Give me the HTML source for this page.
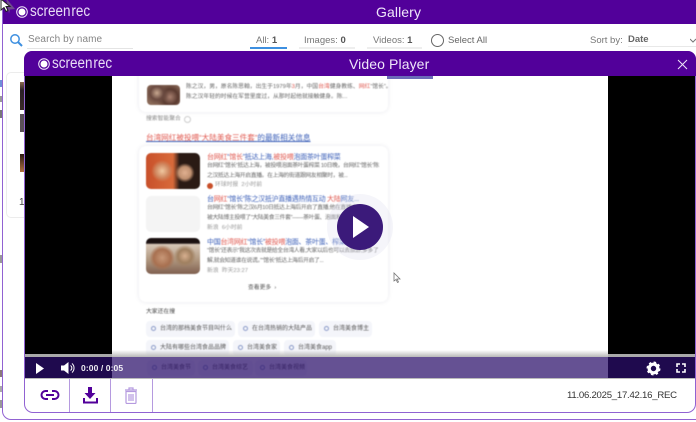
<!DOCTYPE html>
<html><head><meta charset="utf-8"><style>
html,body{margin:0;padding:0;background:#fff}
body{width:696px;height:422px;position:relative;overflow:hidden;font-family:"Liberation Sans","Noto Sans CJK SC",sans-serif}
.a{position:absolute}
.t{position:absolute;white-space:nowrap;line-height:1}
.u{position:absolute;height:1px;background:#e4e4e4}
.hd{background:#52009a;color:#f0e6fa}
.c{position:absolute;background:#fff;border-radius:7px;box-shadow:0 0 5px rgba(90,90,130,.14)}
.l{position:absolute;white-space:nowrap;font-size:5.8px;line-height:1;color:#666}
.n{letter-spacing:-.33px}
.h{position:absolute;white-space:nowrap;font-size:7px;line-height:1;color:#3b5fb8;letter-spacing:-.28px}
.r{color:#e0584f}
.chip{position:absolute;height:16px;background:#f4f5fa;border-radius:4px;font-size:6px;line-height:16px;color:#555;white-space:nowrap;padding-left:14px;box-sizing:border-box}
.chip:before{content:"";position:absolute;left:5px;top:5px;width:3px;height:3px;border:1px solid #8a9ac8;border-radius:50%}
.th{position:absolute;width:54px;height:36px;border-radius:5px;overflow:hidden}
.logo{transform:scaleX(.87);transform-origin:0 0;font-size:15.5px;color:#e8dcf6}
</style></head><body>

<!-- behind fragments -->
<div class="a" style="left:0;top:80px;width:2px;height:7px;background:#6f8fd8"></div>
<div class="a" style="left:0;top:96px;width:2px;height:6px;background:#999"></div>
<div class="a" style="left:0;top:110px;width:2px;height:8px;background:#777"></div>
<div class="a" style="left:0;top:255px;width:2px;height:8px;background:#999"></div>
<div class="a" style="left:0;top:370px;width:2px;height:7px;background:#8a7a7a"></div>
<div class="a" style="left:0;top:386px;width:2px;height:6px;background:#aaa"></div>
<div class="a" style="left:0;top:400px;width:2px;height:8px;background:#999"></div>

<!-- gallery window -->
<div class="a" style="left:2px;top:-10px;width:720px;height:430px;box-sizing:border-box;border:1px solid #9162d2;border-radius:9px;background:#fff"></div>
<div class="a hd" style="left:3px;top:0;width:693px;height:24px"></div>
<svg class="a" style="left:15px;top:5px" width="14" height="14" viewBox="0 0 14 14"><circle cx="7" cy="7" r="5.3" fill="none" stroke="#f0e6fa" stroke-width="1"/><circle cx="7" cy="7" r="3.5" fill="#fff"/></svg>
<div class="t logo" style="left:30px;top:4px">screen<span style="margin-left:1px">rec</span></div>
<div class="t" style="left:376px;top:5px;font-size:14px;color:#efe6fa;letter-spacing:.1px">Gallery</div>

<svg class="a" style="left:9px;top:33px" width="15" height="15" viewBox="0 0 15 15"><circle cx="6" cy="6" r="4.2" fill="none" stroke="#3d8fe0" stroke-width="1.5"/><path d="M9 9l4 4" stroke="#3d8fe0" stroke-width="2"/></svg>
<div class="t" style="left:28px;top:35px;font-size:10px;color:#858585;letter-spacing:.1px">Search by name</div>
<div class="u" style="left:27px;top:48px;width:106px"></div>
<div class="t" style="left:256px;top:36px;font-size:9.5px;color:#777">All: <b style="color:#555">1</b></div>
<div class="a" style="left:250px;top:47px;width:37px;height:2px;background:#3d8fe0"></div>
<div class="t" style="left:304px;top:36px;font-size:9.5px;color:#777">Images: <b style="color:#555">0</b></div>
<div class="u" style="left:299px;top:47px;width:56px;height:2px;background:#eee"></div>
<div class="t" style="left:373px;top:36px;font-size:9.5px;color:#777">Videos: <b style="color:#555">1</b></div>
<div class="u" style="left:367px;top:47px;width:55px;height:2px;background:#eee"></div>
<div class="a" style="left:431px;top:34px;width:13px;height:13px;box-sizing:border-box;border:1.2px solid #666;border-radius:50%"></div>
<div class="t" style="left:448px;top:36px;font-size:9.5px;color:#666">Select All</div>
<div class="t" style="left:590px;top:36px;font-size:9.5px;color:#777">Sort by:</div>
<div class="t" style="left:628px;top:35px;font-size:9.5px;font-weight:bold;color:#666">Date</div>
<div class="u" style="left:628px;top:46px;width:68px;height:1px;background:#e8e8e8"></div>
<svg class="a" style="left:690px;top:38px" width="6" height="5"><path d="M0 1l3 3 3-3" fill="none" stroke="#777"/></svg>

<!-- gallery card behind -->
<div class="a" style="left:6px;top:72px;width:30px;height:146px;box-sizing:border-box;border:1px solid #ececec;border-radius:5px"></div>
<div class="a" style="left:20px;top:82px;width:6px;height:28px;background:linear-gradient(#8a6a50,#2a2028 30%,#3a2a28)"></div>
<div class="a" style="left:20px;top:114px;width:6px;height:18px;background:#5a5058"></div>
<div class="a" style="left:20px;top:154px;width:6px;height:18px;background:linear-gradient(#2a1a14,#b07040)"></div>
<div class="t" style="left:19px;top:198px;font-size:10px;color:#444">1</div>

<!-- player -->
<div class="a" style="left:24px;top:51px;width:672px;height:362px;box-sizing:border-box;border:1px solid #9162d2;border-radius:9px;background:#fff;overflow:hidden"></div>
<div class="a hd" style="left:24px;top:51px;width:672px;height:25px;border-radius:8px 8px 0 0"></div>
<svg class="a" style="left:37px;top:57px" width="14" height="14" viewBox="0 0 14 14"><circle cx="7" cy="7" r="5.3" fill="none" stroke="#f0e6fa" stroke-width="1"/><circle cx="7" cy="7" r="3.5" fill="#fff"/></svg>
<div class="t logo" style="left:52px;top:56px">screen<span style="margin-left:1px">rec</span></div>
<div class="t" style="left:349px;top:57px;font-size:14px;color:#efe6fa;letter-spacing:.1px">Video Player</div>
<svg class="a" style="left:677px;top:59px" width="11" height="11"><path d="M1 1l9 9M10 1l-9 9" stroke="#efe6fa" stroke-width="1"/></svg>

<!-- video -->
<div class="a" style="left:25px;top:76px;width:670px;height:281px;background:#000"></div>
<div class="a" style="left:25px;top:354px;width:670px;height:3px;background:#a9a9a9"></div>
<div class="a" style="left:25px;top:357px;width:670px;height:21px;background:#1f0a4e"></div>
<div class="a" style="left:112px;top:76px;width:496px;height:302px;background:#fff;overflow:hidden">
 <div class="a" style="left:0;top:-76px;width:496px;height:400px;filter:blur(.45px)">
  <div class="c" style="left:27px;top:60px;width:249px;height:52px"></div>
  <div class="a" style="left:35px;top:85px;width:33px;height:20px;border-radius:4px;background:radial-gradient(circle at 30% 40%,#c8a890 0,#6a4a40 25%,transparent 45%),radial-gradient(circle at 70% 60%,#a88070 0,#5a3a30 30%,transparent 55%),#8a6a58"></div>
  <div class="l" style="left:74px;top:85px">陈之汉，男，原名陈思翰，出生于1979年<span class="r">3</span>月，中国<span class="r">台湾</span>健身教练、<span class="r">网红</span>“馆长”。</div>
  <div class="l" style="left:74px;top:95px">陈之汉年轻的时候在军营里度过，从那时起他就接触健身。陈...</div>
  <div class="l" style="left:34px;top:117px;color:#888">搜索智能聚合</div>
  <div class="a" style="left:72px;top:116px;width:5px;height:5px;border:1px solid #ccc;border-radius:50%"></div>
  <div class="t" style="left:34px;top:134px;font-size:7.6px;color:#3b5fb8;text-decoration:underline;text-decoration-thickness:.5px"><span class="r">台湾网红被投喂“大陆美食三件套”</span>的最新相关信息</div>

  <div class="c" style="left:27px;top:146px;width:249px;height:156px"></div>
  <div class="th" style="left:34px;top:153px;background:radial-gradient(circle at 72% 55%,#e0b090 0,#c09070 14%,transparent 22%),radial-gradient(circle at 30% 50%,#f0c8a0 0,#d08860 16%,transparent 26%),linear-gradient(90deg,#c8502a 0,#d86a3a 50%,#2a1a14 62%,#2a1a14 100%)"></div>
  <div class="h" style="left:95px;top:154px"><span class="r">台网红</span>“<span class="r">馆长</span>”抵达上海,<span class="r">被投喂</span>泡面茶叶蛋榨菜</div>
  <div class="l n" style="left:95px;top:164px">台网红“馆长”抵达上海，被投喂泡面茶叶蛋榨菜 10日晚，台网红“馆长”陈</div>
  <div class="l n" style="left:95px;top:174px">之汉抵达上海开启直播。在上海的街道跟网友相聚时，被...</div>
  <div class="a" style="left:95px;top:183px;width:6px;height:6px;border-radius:50%;background:#c8502a"></div>
  <div class="l" style="left:103px;top:183px;color:#999">环球时报&nbsp; 2小时前</div>

  <div class="th" style="left:34px;top:196px;background:#f4f4f4"></div>
  <div class="h" style="left:95px;top:196px">台<span class="r">网红</span>“馆长”陈之汉抵沪直播遇热情互动 <span class="r">大陆</span>网友...</div>
  <div class="l n" style="left:95px;top:206px">台网红“馆长”陈之汉6月10日抵达上海后开启了直播,他在直播中</div>
  <div class="l n" style="left:95px;top:216px">被大陆博主投喂了“大陆美食三件套”——茶叶蛋、泡面和榨菜...</div>
  <div class="l" style="left:95px;top:226px;color:#999">新浪&nbsp; 6小时前</div>

  <div class="th" style="left:34px;top:238px;background:radial-gradient(circle at 30% 55%,#c89878 0,#a87050 20%,transparent 30%),radial-gradient(circle at 72% 50%,#d8b090 0,#a08060 16%,transparent 26%),linear-gradient(180deg,#1a1010 0,#1a1010 14%,#d8c8b8 18%,#b09880 60%,#806050)"></div>
  <div class="h" style="left:95px;top:239px">中国<span class="r">台湾网红</span>“馆长”<span class="r">被投喂</span>泡面、茶叶蛋、榨菜...</div>
  <div class="l n" style="left:95px;top:249px">“馆长”还表示“我这次去就是给全台湾人看,大家以后也可以去旅游,多多了</div>
  <div class="l n" style="left:95px;top:259px">解,就会知道谁在说谎。”“馆长”抵达上海后开启了...</div>
  <div class="l" style="left:95px;top:269px;color:#999">新浪&nbsp; 昨天23:27</div>
  <div class="l" style="left:136px;top:286px;color:#555">查看更多 &nbsp;›</div>

  <div class="l" style="left:34px;top:310px;color:#444">大家还在搜</div>
  <div class="chip" style="left:34px;top:321px;width:89px">台湾的那档美食节目叫什么</div>
  <div class="chip" style="left:126px;top:321px;width:77px">在台湾热销的大陆产品</div>
  <div class="chip" style="left:207px;top:321px;width:53px">台湾美食博主</div>
  <div class="chip" style="left:34px;top:340px;width:83px">大陆有哪些台湾食品品牌</div>
  <div class="chip" style="left:121px;top:340px;width:47px">台湾美食家</div>
  <div class="chip" style="left:172px;top:340px;width:52px">台湾美食app</div>
  <div class="chip" style="left:35px;top:360px;width:48px">台湾美食节</div>
  <div class="chip" style="left:86px;top:360px;width:55px">台湾美食综艺</div>
  <div class="chip" style="left:143px;top:360px;width:52px">台湾美食视频</div>
 </div>
</div>
<div class="a" style="left:387px;top:76px;width:46px;height:3px;background:#6a6ab8"></div>
<svg class="a" style="left:393px;top:272px" width="8" height="12" viewBox="0 0 8 12"><path d="M1 1v8l2-1.500 1.500 3 1-.5-1.500-3H7z" fill="#fff" stroke="#777" stroke-width=".8"/></svg>

<!-- play -->
<div class="a" style="left:327px;top:194px;width:66px;height:66px;border-radius:50%;background:rgba(225,225,240,.32)"></div>
<div class="a" style="left:337px;top:204px;width:46px;height:46px;border-radius:50%;background:#3b1a7a"></div>
<svg class="a" style="left:353px;top:216px" width="17" height="22"><path d="M0 0L16 11 0 22z" fill="#fff"/></svg>

<!-- controls -->
<div class="a" style="left:112px;top:350px;width:496px;height:7px;background:linear-gradient(rgba(184,184,184,0),#b8b8b8)"></div>
<div class="a" style="left:112px;top:357px;width:496px;height:21px;background:rgba(42,14,105,.72)"></div>
<div class="a" style="left:25px;top:378px;width:670px;height:1px;background:#bbb"></div>
<svg class="a" style="left:36px;top:363px" width="9" height="11"><path d="M0 0L8 5.500 0 11z" fill="#fff"/></svg>
<svg class="a" style="left:61px;top:361px" width="15" height="14" viewBox="0 0 15 14"><path d="M0 4.500h3L7.500 1v12L3 9.500H0z" fill="#fff"/><path d="M9.500 4.500a3 3 0 0 1 0 5M11 2.500a6 6 0 0 1 0 9" fill="none" stroke="#fff"/></svg>
<div class="t" style="left:81px;top:364px;font-size:8.500px;font-weight:bold;color:#fff;letter-spacing:.1px;opacity:.92">0:00 / 0:05</div>
<svg class="a" style="left:646px;top:361px" width="15" height="15" viewBox="0 0 15 15"><circle cx="7.500" cy="7.500" r="4.300" fill="none" stroke="#fff" stroke-width="3.200"/><circle cx="7.500" cy="7.500" r="6" fill="none" stroke="#fff" stroke-width="2" stroke-dasharray="2.400 2.300"/></svg>
<svg class="a" style="left:676px;top:363px" width="10" height="10" viewBox="0 0 10 10"><path d="M1 4V1h3M6 1h3v3M9 6v3H6M4 9H1V6" fill="none" stroke="#fff" stroke-width="1.600"/></svg>

<!-- toolbar -->
<div class="a" style="left:69px;top:379px;width:1px;height:33px;background:#b59adf"></div>
<div class="a" style="left:110px;top:379px;width:1px;height:33px;background:#b59adf"></div>
<div class="a" style="left:152px;top:379px;width:1px;height:33px;background:#b59adf"></div>
<svg class="a" style="left:40px;top:389px" width="20" height="12" viewBox="0 0 20 12"><path d="M8 2H5.500a4 4 0 0 0 0 8H8M12 2h2.500a4 4 0 0 1 0 8H12M6 6h8" fill="none" stroke="#52009a" stroke-width="2"/></svg>
<svg class="a" style="left:83px;top:387px" width="15" height="17" viewBox="0 0 15 17"><path d="M5 0h4v6h3.500L7 12 1.500 6H5z" fill="#52009a"/><path d="M1 11v4.500h13V11" fill="none" stroke="#52009a" stroke-width="2"/></svg>
<svg class="a" style="left:124px;top:387px" width="14" height="17" viewBox="0 0 14 17"><path d="M1 3h12M5 3V1h4v2" fill="none" stroke="#b59adf" stroke-width="1.200"/><path d="M2 4.500h10v11a1 1 0 0 1-1 1H3a1 1 0 0 1-1-1zM5 7v7M7 7v7M9 7v7" fill="none" stroke="#b59adf" stroke-width="1.200"/></svg>
<div class="t" style="left:567px;top:391px;font-size:9.600px;color:#333;letter-spacing:-.25px">11.06.2025_17.42.16_REC</div>

<!-- mouse cursor -->
<svg class="a" style="left:0;top:-2px" width="18" height="18" viewBox="0 0 18 18"><path d="M6 0l9 11-5 .5-1 4z" fill="#888" opacity=".55"/><path d="M1 1v11l3-2.500 2 4 2-1-2-4h4z" fill="#fff" stroke="#222" stroke-width="1"/></svg>
</body></html>
